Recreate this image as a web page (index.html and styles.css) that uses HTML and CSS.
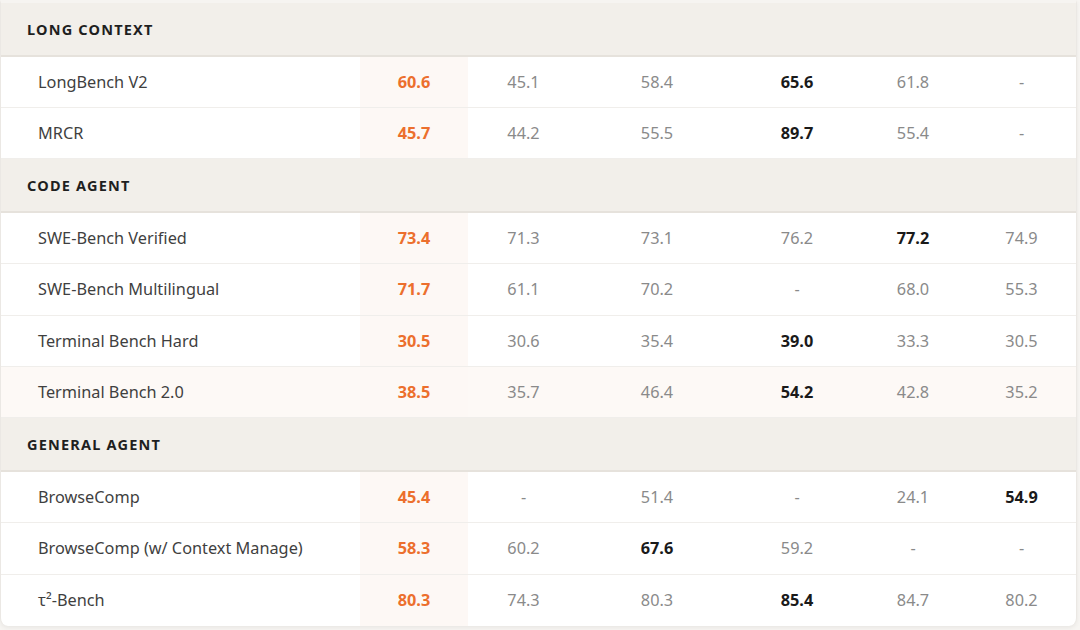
FILE: index.html
```html
<!DOCTYPE html>
<html>
<head>
<meta charset="utf-8">
<link rel="stylesheet" href="styles.css">
</head>
<body>
<div class="card">
  <div class="section">Long Context</div>
  <div class="row"><div class="name">LongBench V2</div><div class="c hi">60.6</div><div class="c">45.1</div><div class="c">58.4</div><div class="c best">65.6</div><div class="c">61.8</div><div class="c">-</div></div>
  <div class="row"><div class="name">MRCR</div><div class="c hi">45.7</div><div class="c">44.2</div><div class="c">55.5</div><div class="c best">89.7</div><div class="c">55.4</div><div class="c">-</div></div>
  <div class="section">Code Agent</div>
  <div class="row"><div class="name">SWE-Bench Verified</div><div class="c hi">73.4</div><div class="c">71.3</div><div class="c">73.1</div><div class="c">76.2</div><div class="c best">77.2</div><div class="c">74.9</div></div>
  <div class="row"><div class="name">SWE-Bench Multilingual</div><div class="c hi">71.7</div><div class="c">61.1</div><div class="c">70.2</div><div class="c">-</div><div class="c">68.0</div><div class="c">55.3</div></div>
  <div class="row"><div class="name">Terminal Bench Hard</div><div class="c hi">30.5</div><div class="c">30.6</div><div class="c">35.4</div><div class="c best">39.0</div><div class="c">33.3</div><div class="c">30.5</div></div>
  <div class="row hover"><div class="name">Terminal Bench 2.0</div><div class="c hi">38.5</div><div class="c">35.7</div><div class="c">46.4</div><div class="c best">54.2</div><div class="c">42.8</div><div class="c">35.2</div></div>
  <div class="section">General Agent</div>
  <div class="row"><div class="name">BrowseComp</div><div class="c hi">45.4</div><div class="c">-</div><div class="c">51.4</div><div class="c">-</div><div class="c">24.1</div><div class="c best">54.9</div></div>
  <div class="row"><div class="name">BrowseComp (w/ Context Manage)</div><div class="c hi">58.3</div><div class="c">60.2</div><div class="c best">67.6</div><div class="c">59.2</div><div class="c">-</div><div class="c">-</div></div>
  <div class="row last"><div class="name">τ²-Bench</div><div class="c hi">80.3</div><div class="c">74.3</div><div class="c">80.3</div><div class="c best">85.4</div><div class="c">84.7</div><div class="c">80.2</div></div>
</div>
</body>
</html>
```

FILE: styles.css
```css
html, body {
  margin: 0;
  padding: 0;
  background: #f7f5f2;
}
body {
  font-family: "Noto Sans", "Open Sans", sans-serif;
  width: 1080px;
  height: 630px;
  overflow: hidden;
}
.card {
  margin: 0 3px 0 0;
  background: #ffffff;
  border-left: 1px solid #ebe8e4;
  border-right: 1px solid #ebe8e4;
  border-top: 3px solid #f6f4f1;
  border-radius: 0 0 8px 8px;
  box-shadow: 0 2px 4px rgba(0,0,0,0.06);
  overflow: hidden;
}
.section {
  height: 53.5px;
  box-sizing: border-box;
  background: #f2efea;
  border-bottom: 2px solid #e6e2dc;
  display: flex;
  align-items: center;
  padding-left: 26px;
  text-transform: uppercase;
  font-weight: 700;
  font-size: 14.5px;
  letter-spacing: 1.2px;
  color: #1f1f1f;
}
.row {
  display: grid;
  grid-template-columns: 359px 108px 111px 156px 124px 108px 1fr;
  height: 51.4px;
  box-sizing: border-box;
  border-bottom: 1px solid #f0eeeb;
  align-items: stretch;
}
.row.last { border-bottom: none; }
.row.hover { background: #fdf9f6; }
.name {
  display: flex;
  align-items: center;
  padding-left: 37px;
  font-size: 16.3px;
  color: #3f3f3f;
}
.c {
  display: flex;
  align-items: center;
  justify-content: center;
  font-size: 16.3px;
  color: #8a8a8a;
}
.c.hi {
  background: #fdf8f5;
  color: #ec6f2d;
  font-weight: 700;
}
.c.best {
  color: #1a1a1a;
  font-weight: 700;
}
```
